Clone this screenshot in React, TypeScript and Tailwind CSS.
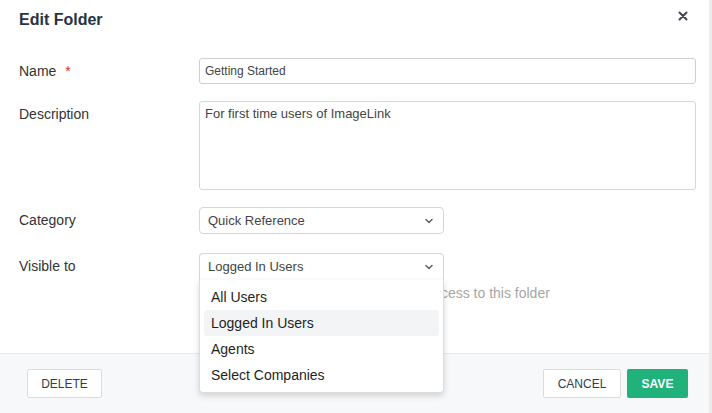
import React from "react";

const Chevron = () => (
  <svg width="10" height="10" viewBox="0 0 10 10" className="text-[#666]">
    <path d="M2 3.5 L5 6.5 L8 3.5" fill="none" stroke="currentColor" strokeWidth="1.6" strokeLinecap="round" strokeLinejoin="round" />
  </svg>
);

export default function App() {
  const font = { fontFamily: '"Liberation Sans", Arial, sans-serif' };
  return (
    <div className="w-[712px] h-[413px] flex bg-[#ebebeb] overflow-hidden" style={font}>
      <div className="w-[709px] h-full bg-white flex flex-col">
        {/* header */}
        <div className="h-[40px] flex items-start justify-between pl-[19px] pr-[21px]">
          <div className="pt-[11px] text-[16px] leading-[18px] font-bold text-[#253444]">Edit Folder</div>
          <svg width="10" height="10" viewBox="0 0 10 10" className="mt-[11px] text-[#3f4650]">
            <path d="M1.5 1.5 L8.5 8.5 M8.5 1.5 L1.5 8.5" stroke="currentColor" strokeWidth="2" strokeLinecap="round" />
          </svg>
        </div>
        {/* body */}
        <div className="flex-1 pt-[18px] pl-[19px] pr-[13px] text-[#333]">
          <div className="grid grid-cols-[180px_1fr] items-start">
            <div className="text-[14px] leading-[26px]">
              Name <span className="text-[#d0312d] ml-[5px]">*</span>
            </div>
            <div className="h-[26px] border border-[#cfcfcf] rounded-[3px] px-[5px] text-[12px] leading-[24px] text-[#444]">
              Getting Started
            </div>
          </div>
          <div className="grid grid-cols-[180px_1fr] items-start mt-[17px]">
            <div className="text-[14px] leading-[26px]">Description</div>
            <div className="h-[89px] border border-[#d6d6d6] rounded-[3px] px-[5px] pt-[4px] text-[13px] leading-[16px] text-[#444]">
              For first time users of ImageLink
            </div>
          </div>
          <div className="grid grid-cols-[180px_1fr] items-start mt-[17px]">
            <div className="text-[14px] leading-[27px]">Category</div>
            <div className="w-[245px] h-[27px] border border-[#d6d6d6] rounded-[4px] pl-[8px] pr-[9px] flex items-center justify-between text-[13px] text-[#444]">
              <span>Quick Reference</span>
              <Chevron />
            </div>
          </div>
          <div className="grid grid-cols-[180px_1fr] items-start mt-[19px]">
            <div className="text-[14px] leading-[27px]">Visible to</div>
            <div className="relative">
              <div className="w-[245px] h-[27px] border border-b-0 border-[#d6d6d6] rounded-t-[4px] pl-[8px] pr-[9px] flex items-center justify-between text-[13px] text-[#444] bg-white">
                <span>Logged In Users</span>
                <Chevron />
              </div>
              <div className="mt-[5px] pl-[10px] text-[14px] leading-[16px] text-[#a6a6a6] whitespace-nowrap">
                Only users that are logged in have access to this folder
              </div>
              <div className="absolute left-0 top-[27px] z-10 w-[245px] bg-white border border-t-0 border-[#dcdcdc] rounded-b-[4px] shadow-[0_3px_6px_rgba(0,0,0,0.15)] px-[4px] pt-[4px] pb-[4px] text-[14px] text-[#1f1f1f]">
                <div className="h-[26px] leading-[26px] px-[7px] rounded-[3px]">All Users</div>
                <div className="h-[26px] leading-[26px] px-[7px] rounded-[3px] bg-[#f3f4f6]">Logged In Users</div>
                <div className="h-[26px] leading-[26px] px-[7px] rounded-[3px]">Agents</div>
                <div className="h-[26px] leading-[26px] px-[7px] rounded-[3px]">Select Companies</div>
              </div>
            </div>
          </div>
        </div>
        {/* footer */}
        <div className="h-[60px] border-t border-[#e8e8e8] bg-[#f7f8fa] flex items-center justify-between pl-[27px] pr-[21px]">
          <button className="w-[75px] h-[29px] bg-white border border-[#dcdcdc] rounded-[2px] text-[12px] text-[#2d3e50]">
            DELETE
          </button>
          <div className="flex gap-[6px]">
            <button className="w-[78px] h-[29px] bg-white border border-[#dcdcdc] rounded-[2px] text-[12px] text-[#2d3e50]">
              CANCEL
            </button>
            <button className="w-[61px] h-[29px] bg-[#20b27a] rounded-[2px] text-[12px] font-bold text-white">
              SAVE
            </button>
          </div>
        </div>
      </div>
    </div>
  );
}
